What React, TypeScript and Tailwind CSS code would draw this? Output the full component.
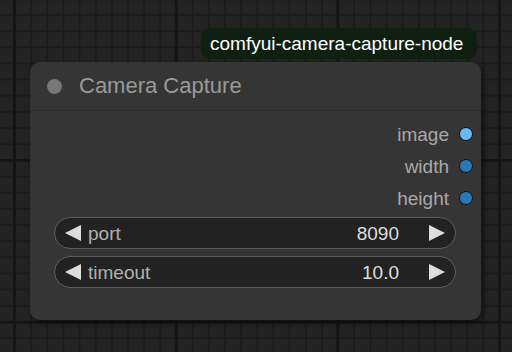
const outputs = [
    { name: "image", color: "bg-[#6bb8f5]" },
    { name: "width", color: "bg-[#2c78b4]" },
    { name: "height", color: "bg-[#2c78b4]" },
]

const widgets = [
    { name: "port", value: "8090" },
    { name: "timeout", value: "10.0" },
]

const Arrow = ({ dir }: { dir: "left" | "right" }) => (
    <svg width="16" height="16" viewBox="0 0 16 16" className="shrink-0">
        <polygon
            points={dir === "left" ? "16,0 16,16 0,8" : "0,0 0,16 16,8"}
            fill="#dddddd"
        />
    </svg>
)

const App = () => {
    return (
        <div className="relative h-[352px] w-[512px] overflow-hidden bg-[#232323] bg-[linear-gradient(to_right,#151515_3px,transparent_3px),linear-gradient(to_bottom,#151515_3px,transparent_3px),linear-gradient(to_right,#1b1b1b_2px,transparent_2px),linear-gradient(to_bottom,#1b1b1b_2px,transparent_2px)] bg-[size:161.7px_161.7px,161.7px_161.7px,16.17px_16.17px,16.17px_16.17px] bg-[position:13px_159px,13px_159px,14px_14px,14px_14px] font-['Liberation_Sans',Arial,sans-serif]">
            <div className="absolute left-[201px] top-[28px] flex h-[31px] w-[276px] items-center rounded-[9px] bg-[#102010] pl-[9px] text-[19px] leading-none text-white">
                comfyui-camera-capture-node
            </div>

            <div className="absolute left-[30px] top-[62px] flex h-[258px] w-[451px] flex-col rounded-[10px] bg-[#353535] shadow-[2px_3px_6px_rgba(0,0,0,0.5)]">
                <div className="flex h-[49px] items-center gap-[17px] border-b border-[#2b2b2b] pl-[17px]">
                    <div className="h-[15px] w-[15px] rounded-full bg-[#777777]" />
                    <span className="text-[22px] leading-none text-[#9a9a9a]">Camera Capture</span>
                </div>

                <div className="flex flex-col pt-[7px]">
                    {outputs.map((o) => (
                        <div key={o.name} className="flex h-[32px] items-center justify-end gap-[10px] pr-[8px]">
                            <span className="text-[19px] leading-none text-[#a8a8a8]">{o.name}</span>
                            <div className={`h-[14px] w-[14px] rounded-full border-[1.5px] border-[#111] ${o.color}`} />
                        </div>
                    ))}
                </div>

                <div className="mt-[3px] flex flex-col gap-[7px] pl-[24px] pr-[25px]">
                    {widgets.map((w) => (
                        <div
                            key={w.name}
                            className="flex h-[32px] items-center rounded-full border border-[#5e5e5e] bg-[#222222] px-[10px] text-[19px] leading-none"
                        >
                            <Arrow dir="left" />
                            <span className="ml-[7px] flex-1 text-[#b0b0b0]">{w.name}</span>
                            <span className="mr-[30px] text-[#dedede]">{w.value}</span>
                            <Arrow dir="right" />
                        </div>
                    ))}
                </div>
            </div>
        </div>
    )
}

export default App
